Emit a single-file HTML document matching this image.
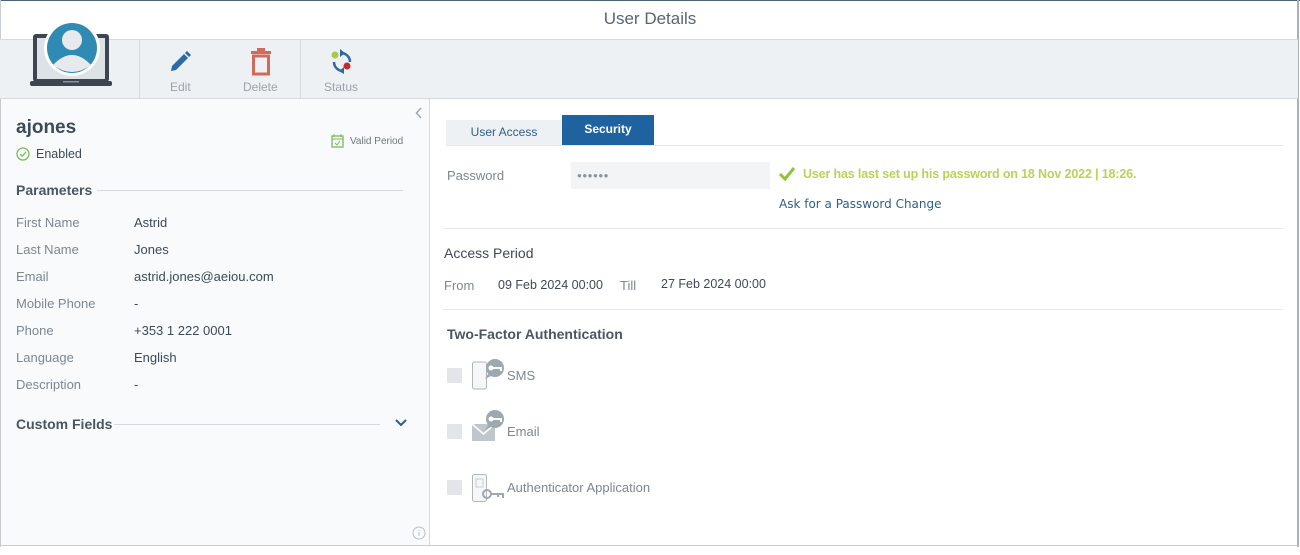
<!DOCTYPE html>
<html><head><meta charset="utf-8"><style>
*{margin:0;padding:0;box-sizing:border-box}
body{width:1300px;height:555px;background:#fff;font-family:"Liberation Sans",sans-serif;position:relative;overflow:hidden;color:#3d4a57}
.a{position:absolute}
.lbl{font-size:13px;color:#7d8791}
.val{font-size:13px;color:#3d4a57}
</style></head><body>
<div class="a" style="left:0;top:0;width:1300px;height:1px;background:#4a6478"></div>
<div class="a" style="left:1297px;top:0;width:2px;height:547px;background:#a9b0b7"></div>
<div class="a" style="left:0;top:0;width:1px;height:547px;background:#c8cdd2"></div>
<div class="a" style="left:0;top:9px;width:1300px;text-align:center;font-size:17px;color:#5a6570">User Details</div>
<div class="a" style="left:0;top:39px;width:1298px;height:60px;background:#eef1f4;border-top:1px solid #d6dadf;border-bottom:1px solid #d6dadf"></div>
<div class="a" style="left:139px;top:40px;width:1px;height:58px;background:#d6dadf"></div>
<div class="a" style="left:300px;top:40px;width:1px;height:58px;background:#d6dadf"></div>
<!-- laptop avatar -->
<svg class="a" style="left:29px;top:19px" width="86" height="68" viewBox="0 0 86 68">
<rect x="4" y="15" width="76" height="48" rx="3" fill="#3d4650"/>
<rect x="8" y="19" width="68" height="41" fill="#dde2e6"/>
<rect x="1" y="62" width="82" height="5" rx="2" fill="#3d4650"/>
<rect x="34" y="62" width="16" height="1.5" fill="#8a939b"/>
<circle cx="43" cy="29" r="28" fill="#fff"/>
<circle cx="43" cy="29" r="25" fill="#2f8bb3"/>
<circle cx="43" cy="21" r="10" fill="#e6eaed"/>
<path d="M24 46 Q43 26 62 46 Q43 60 24 46Z" fill="#e6eaed"/>
</svg>
<!-- edit -->
<svg class="a" style="left:168px;top:50px" width="24" height="24" viewBox="0 0 24 24"><path d="M3 21 L4 16 L16 4 L20 8 L8 20Z" fill="#2a6aa5"/><path d="M17 3 L19 1 L23 5 L21 7Z" fill="#2a6aa5"/></svg>
<div class="a" style="left:170px;top:80px;font-size:12px;color:#9aa3ab">Edit</div>
<svg class="a" style="left:249px;top:48px" width="24" height="28" viewBox="0 0 24 28"><rect x="2" y="3" width="20" height="3" fill="#d06a5a"/><rect x="8" y="0" width="8" height="3" fill="#d06a5a"/><rect x="4.5" y="8" width="15" height="18" fill="none" stroke="#d06a5a" stroke-width="3"/></svg>
<div class="a" style="left:243px;top:80px;font-size:12px;color:#9aa3ab">Delete</div>
<svg class="a" style="left:329px;top:49px" width="26" height="26" viewBox="0 0 26 26"><path d="M5 13 A9 9 0 0 0 14 22" fill="none" stroke="#2a6aa5" stroke-width="2.5"/><path d="M10 22 L15 18 L15 25Z" fill="#2a6aa5"/><path d="M21 13 A9 9 0 0 0 12 4" fill="none" stroke="#2a6aa5" stroke-width="2.5"/><path d="M16 4 L11 0 L11 8Z" fill="#2a6aa5"/><circle cx="6" cy="6" r="3.5" fill="#a4cc4a"/><circle cx="18" cy="17" r="3.5" fill="#c22b2b"/></svg>
<div class="a" style="left:324px;top:80px;font-size:12px;color:#9aa3ab">Status</div>
<!-- left panel -->
<div class="a" style="left:1px;top:99px;width:429px;height:446px;background:#f8fafc;border-right:1px solid #d6dadf"></div>
<div class="a" style="left:0;top:545px;width:1298px;height:1px;background:#c8cdd2"></div>
<svg class="a" style="left:415px;top:107px" width="8" height="12"><path d="M6 1 L1.5 6 L6 11" fill="none" stroke="#a0a8b0" stroke-width="1.5"/></svg>
<div class="a" style="left:16px;top:117px;font-size:19px;font-weight:bold;color:#3d4a57">ajones</div>
<svg class="a" style="left:16px;top:147px" width="14" height="14"><circle cx="7" cy="7" r="6" fill="none" stroke="#7cb95c" stroke-width="1.3"/><path d="M4 7 L6.3 9.2 L10 5" fill="none" stroke="#7cb95c" stroke-width="1.3"/></svg>
<div class="a val" style="left:36px;top:147px;font-size:12.5px">Enabled</div>
<svg class="a" style="left:331px;top:134px" width="13" height="14"><rect x="1" y="2" width="11" height="11" fill="none" stroke="#7cb95c" stroke-width="1.3"/><path d="M3 0v3M10 0v3M1 5h11M4 9l2 2 3-4" stroke="#7cb95c" fill="none"/></svg>
<div class="a" style="left:350px;top:136px;font-size:10px;color:#6e7880">Valid Period</div>
<div class="a" style="left:16px;top:182px;font-size:14px;font-weight:bold;color:#4a5662">Parameters</div>
<div class="a" style="left:97px;top:190px;width:306px;height:1px;background:#d6dadf"></div>
<div class="a lbl" style="left:16px;top:215px">First Name</div><div class="a val" style="left:134px;top:215px">Astrid</div>
<div class="a lbl" style="left:16px;top:242px">Last Name</div><div class="a val" style="left:134px;top:242px">Jones</div>
<div class="a lbl" style="left:16px;top:269px">Email</div><div class="a val" style="left:134px;top:269px">astrid.jones@aeiou.com</div>
<div class="a lbl" style="left:16px;top:296px">Mobile Phone</div><div class="a val" style="left:134px;top:296px">-</div>
<div class="a lbl" style="left:16px;top:323px">Phone</div><div class="a val" style="left:134px;top:323px">+353 1 222 0001</div>
<div class="a lbl" style="left:16px;top:350px">Language</div><div class="a val" style="left:134px;top:350px">English</div>
<div class="a lbl" style="left:16px;top:377px">Description</div><div class="a val" style="left:134px;top:377px">-</div>
<div class="a" style="left:16px;top:416px;font-size:14px;font-weight:bold;color:#4a5662">Custom Fields</div>
<div class="a" style="left:114px;top:424px;width:266px;height:1px;background:#d6dadf"></div>
<svg class="a" style="left:395px;top:419px" width="12" height="8"><path d="M1 1 L6 6 L11 1" fill="none" stroke="#2a5f8f" stroke-width="2"/></svg>
<svg class="a" style="left:412px;top:526px" width="14" height="14"><circle cx="7" cy="7" r="6" fill="none" stroke="#b8c0c7"/><path d="M7 6v4M7 4v1" stroke="#b8c0c7"/></svg>
<!-- tabs -->
<div class="a" style="left:446px;top:120px;width:116px;height:25px;background:#eef1f4;font-size:12px;color:#2f5f88;text-align:center;line-height:25px">User Access</div>
<div class="a" style="left:562px;top:115px;width:92px;height:30px;background:#1e63a0;font-size:12px;font-weight:bold;color:#fff;text-align:center;line-height:29px">Security</div>
<div class="a" style="left:446px;top:145px;width:837px;height:1px;background:#e6e9ec"></div>
<div class="a lbl" style="left:447px;top:168px">Password</div>
<div class="a" style="left:571px;top:162px;width:199px;height:27px;background:#f2f4f6;font-size:8px;color:#8a939b;padding:9px 0 0 6px;letter-spacing:0.5px">●●●●●●</div>
<svg class="a" style="left:778px;top:166px" width="18" height="15"><path d="M2 8 L7 13 L16 2" fill="none" stroke="#8cc43c" stroke-width="3"/></svg>
<div class="a" style="left:803px;top:167px;font-size:12.5px;font-weight:bold;color:#b7d35a;letter-spacing:-0.15px">User has last set up his password on 18 Nov 2022 | 18:26.</div>
<div class="a" style="left:779px;top:197px;color:#2f5f88;font-family:'DejaVu Sans',sans-serif;font-size:12px">Ask for a Password Change</div>
<div class="a" style="left:443px;top:228px;width:840px;height:1px;background:#e6e9ec"></div>
<div class="a" style="left:444px;top:245px;font-size:14px;color:#3d4a57">Access Period</div>
<div class="a lbl" style="left:444px;top:278px">From</div>
<div class="a val" style="left:498px;top:278px;font-size:12.5px">09 Feb 2024 00:00</div>
<div class="a lbl" style="left:620px;top:278px">Till</div>
<div class="a val" style="left:661px;top:277px;font-size:12.5px">27 Feb 2024 00:00</div>
<div class="a" style="left:443px;top:309px;width:840px;height:1px;background:#e6e9ec"></div>
<div class="a" style="left:447px;top:326px;font-size:14px;font-weight:bold;color:#4a5662">Two-Factor Authentication</div>
<div class="a" style="left:447px;top:368px;width:15px;height:15px;background:#e2e6ea"></div>
<svg class="a" style="left:471px;top:358px" width="36" height="34"><rect x="1.5" y="4" width="14" height="27" rx="2" fill="#f6f7f8" stroke="#aeb6bd"/><circle cx="24" cy="10" r="9" fill="#9ea8b0"/><path d="M17 16 L14 21 L20 18Z" fill="#9ea8b0"/><circle cx="20" cy="10" r="2.5" fill="#fff"/><path d="M22 10h8v3" stroke="#fff" stroke-width="2" fill="none"/></svg>
<div class="a lbl" style="left:507px;top:368px">SMS</div>
<div class="a" style="left:447px;top:424px;width:15px;height:15px;background:#e2e6ea"></div>
<svg class="a" style="left:471px;top:409px" width="36" height="34"><rect x="1" y="15" width="23" height="17" fill="#bfc6cc"/><path d="M1 15 L12.5 25 L24 15" stroke="#fff" stroke-width="1.5" fill="none"/><circle cx="24" cy="10" r="9" fill="#9ea8b0"/><path d="M17 16 L14 21 L20 18Z" fill="#9ea8b0"/><circle cx="20" cy="10" r="2.5" fill="#fff"/><path d="M22 10h8v3" stroke="#fff" stroke-width="2" fill="none"/></svg>
<div class="a lbl" style="left:507px;top:424px">Email</div>
<div class="a" style="left:447px;top:480px;width:15px;height:15px;background:#e2e6ea"></div>
<svg class="a" style="left:471px;top:473px" width="36" height="32"><rect x="1.5" y="1.5" width="14" height="27" rx="2" fill="#f6f7f8" stroke="#aeb6bd"/><rect x="5" y="6" width="7" height="8" fill="none" stroke="#c5ccd2"/><circle cx="16" cy="21" r="4" fill="none" stroke="#9ea8b0" stroke-width="2"/><path d="M20 21h12v4M27 21v3" stroke="#9ea8b0" stroke-width="2" fill="none"/></svg>
<div class="a lbl" style="left:507px;top:480px">Authenticator Application</div>
</body></html>
